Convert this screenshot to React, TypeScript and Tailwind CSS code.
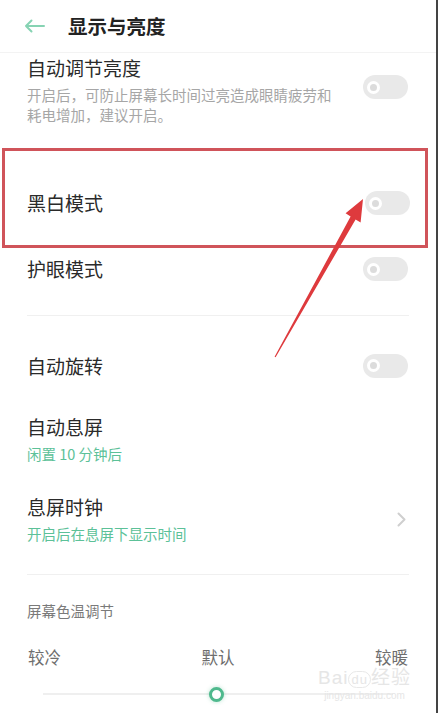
import type { ReactNode } from "react";

const cjk = { fontFamily: '"Noto Sans CJK SC", "Noto Sans", sans-serif' };

function Toggle({ className = "" }: { className?: string }) {
    return (
        <div className={`w-[45px] h-[24px] rounded-full bg-[#e9e9e9] flex items-center shrink-0 ${className}`}>
            <div className="ml-[4px] w-[13px] h-[13px] rounded-full border-[3px] border-white bg-[#dcdcdc]" />
        </div>
    );
}

function Title({ children }: { children: ReactNode }) {
    return <p className="text-[19px] leading-[24px] text-[#2a2a2a]">{children}</p>;
}

function Sub({ children }: { children: ReactNode }) {
    return <p className="mt-[5px] text-[14.5px] leading-[20px] text-[#5cc198]">{children}</p>;
}

export default function App() {
    return (
        <div className="relative w-[438px] h-[713px] overflow-hidden bg-white border-r-2 border-[#444]" style={cjk}>
            <header className="h-[53px] flex items-center border-b border-[#f3f3f3]">
                <svg className="ml-[24px] w-[21px] h-[14px]" viewBox="0 0 21 14" fill="none" stroke="#86d3b3" strokeWidth="2" strokeLinecap="round" strokeLinejoin="round">
                    <path d="M20 7H2M7.5 1.5L2 7l5.5 5.5" />
                </svg>
                <h1 className="ml-[23px] text-[19.5px] font-bold text-[#222]">显示与亮度</h1>
            </header>

            <div className="flex items-start justify-between pl-[27px] pr-[28px] pt-[3px]">
                <div>
                    <Title>自动调节亮度</Title>
                    <p className="mt-[5px] text-[14.5px] leading-[20px] text-[#a6a6a6]">
                        <span className="block">开启后，可防止屏幕长时间过亮造成眼睛疲劳和</span>
                        <span className="block">耗电增加，建议开启。</span>
                    </p>
                </div>
                <Toggle className="mt-[19px]" />
            </div>

            <div className="mt-[23px] ml-[2px] w-[426px] h-[100px] border-[3px] border-[#d0545a] flex items-center justify-between pl-[22px] pr-[15px] pt-[10px]">
                <Title>黑白模式</Title>
                <Toggle />
            </div>

            <div className="h-[42px] flex items-center justify-between pl-[27px] pr-[28px]">
                <Title>护眼模式</Title>
                <Toggle />
            </div>

            <div className="mt-[25px] mx-[27px] h-px bg-[#f0f0f0]" />

            <div className="h-[99px] flex items-center justify-between pl-[27px] pr-[28px]">
                <Title>自动旋转</Title>
                <Toggle />
            </div>

            <div className="pl-[27px]">
                <Title>自动息屏</Title>
                <Sub>闲置 10 分钟后</Sub>
            </div>

            <div className="mt-[31px] flex items-center justify-between pl-[27px] pr-[30px]">
                <div>
                    <Title>息屏时钟</Title>
                    <Sub>开启后在息屏下显示时间</Sub>
                </div>
                <svg className="w-[9px] h-[15px]" viewBox="0 0 9 15" fill="none" stroke="#cfcfcf" strokeWidth="2" strokeLinecap="round" strokeLinejoin="round">
                    <path d="M1.5 1.5l6 6-6 6" />
                </svg>
            </div>

            <div className="mt-[30px] mx-[27px] h-px bg-[#f0f0f0]" />

            <p className="mt-[26px] pl-[27px] text-[14.5px] leading-[20px] text-[#7a7a7a]">屏幕色温调节</p>

            <div className="mt-[25px] flex justify-between px-[28px] text-[16.5px] leading-[22px] text-[#6e6e6e]">
                <span>较冷</span>
                <span>默认</span>
                <span>较暖</span>
            </div>

            <div className="mt-[18px] h-[16px] mx-[43px] flex items-center relative">
                <div className="h-[2px] w-full bg-[#efefef]" />
                <div className="absolute left-[166px] top-[1px] w-[15px] h-[15px] rounded-full border-[3px] border-[#4fb98d] bg-white shadow-[0_0_4px_rgba(79,185,141,0.4)]" />
            </div>

            {/* watermark */}
            <div className="absolute left-[318px] top-[668px] flex flex-col items-center text-[#e6e6e6] leading-none">
                <span className="text-[19px] tracking-[1px]" style={{ fontFamily: '"Liberation Sans", "Noto Sans CJK SC", sans-serif' }}>Bai<span className="text-[13px] border border-[#e8e8e8] rounded-full px-[2px]">du</span>经验</span>
                <span className="mt-[4px] text-[10px]" style={{ fontFamily: '"Liberation Sans", sans-serif' }}>jingyan.baidu.com</span>
            </div>

            <svg className="absolute inset-0 pointer-events-none" width="438" height="713" viewBox="0 0 438 713">
                <polygon
                    points="274.6,356.8 350.6,216.6 345.6,213.2 363,199 360.6,222.6 355.6,219.4 275.6,357.3"
                    fill="#de3a3d"
                />
            </svg>
        </div>
    );
}
